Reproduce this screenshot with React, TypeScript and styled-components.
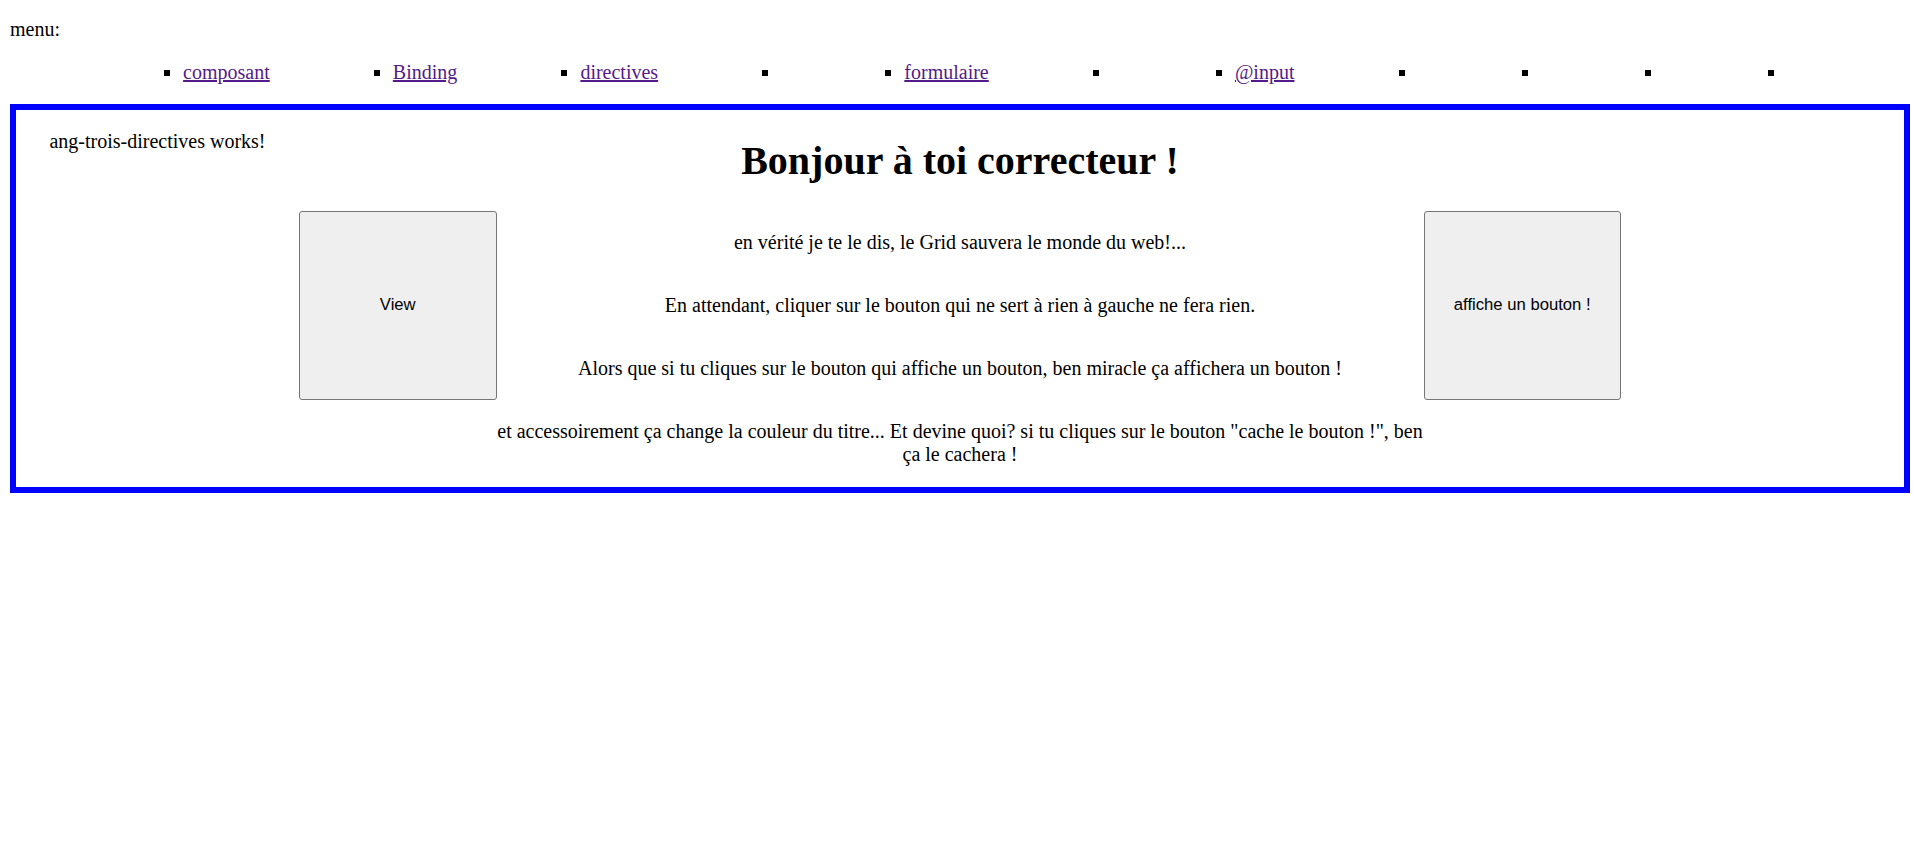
import React from "react";
import styled, { createGlobalStyle } from "styled-components";

const GlobalStyle = createGlobalStyle`
  body {
    margin: 0;
    background: #ffffff;
    color: #000000;
    font-family: "Liberation Serif", "Times New Roman", serif;
    font-size: 20px;
  }
`;

const Page = styled.div`
  padding: 18px 3px 10px 10px;
`;

const MenuLabel = styled.div`
  line-height: normal;
`;

const MenuList = styled.ul`
  display: flex;
  justify-content: space-evenly;
  margin: 20px 0;
  padding: 0 0 0 50px;
  list-style: square;
`;

const MenuItem = styled.li`
  a {
    color: #551a8b;
    text-decoration: underline;
  }
`;

const Board = styled.div`
  border: 6px solid #0000ff;
  padding-bottom: 1px;
  display: grid;
  grid-template-columns: 283px 197.5px 1fr 197.5px 283px;
  text-align: center;
`;

const Works = styled.p`
  grid-column: 1;
  grid-row: 1;
  margin: 20px 0;
`;

const Title = styled.h1`
  grid-column: 3;
  grid-row: 1;
  margin: 26.8px 0;
  font-size: 40px;
  line-height: 47px;
  font-weight: bold;
`;

const Line = styled.p<{ $row: number }>`
  grid-column: 3;
  grid-row: ${(p) => p.$row};
  margin: 20px 0;
`;

const BigButton = styled.button<{ $col: number }>`
  grid-column: ${(p) => p.$col};
  grid-row: 2 / 5;
  margin: 0;
  padding: 1px 8px;
  background: #efefef;
  border: 1px solid #767676;
  border-radius: 3px;
  color: #000000;
  font-family: "Liberation Sans", Arial, sans-serif;
  font-size: 16.67px;
  cursor: default;
`;

const links = ["composant", "Binding", "directives", "", "formulaire", "", "@input", "", "", "", ""];

const App = () => {
  return (
    <>
      <GlobalStyle />
      <Page>
        <MenuLabel>menu:</MenuLabel>
        <MenuList>
          {links.map((l, i) => (
            <MenuItem key={i}>{l ? <a href="#">{l}</a> : null}</MenuItem>
          ))}
        </MenuList>
        <Board>
          <Works>ang-trois-directives works!</Works>
          <Title>Bonjour à toi correcteur !</Title>
          <BigButton $col={2}>View</BigButton>
          <Line $row={2}>en vérité je te le dis, le Grid sauvera le monde du web!...</Line>
          <Line $row={3}>En attendant, cliquer sur le bouton qui ne sert à rien à gauche ne fera rien.</Line>
          <Line $row={4}>Alors que si tu cliques sur le bouton qui affiche un bouton, ben miracle ça affichera un bouton !</Line>
          <BigButton $col={4}>affiche un bouton !</BigButton>
          <Line $row={5}>
            et accessoirement ça change la couleur du titre... Et devine quoi? si tu cliques sur le bouton "cache le bouton !", ben ça le cachera !
          </Line>
        </Board>
      </Page>
    </>
  );
};

export default App;
